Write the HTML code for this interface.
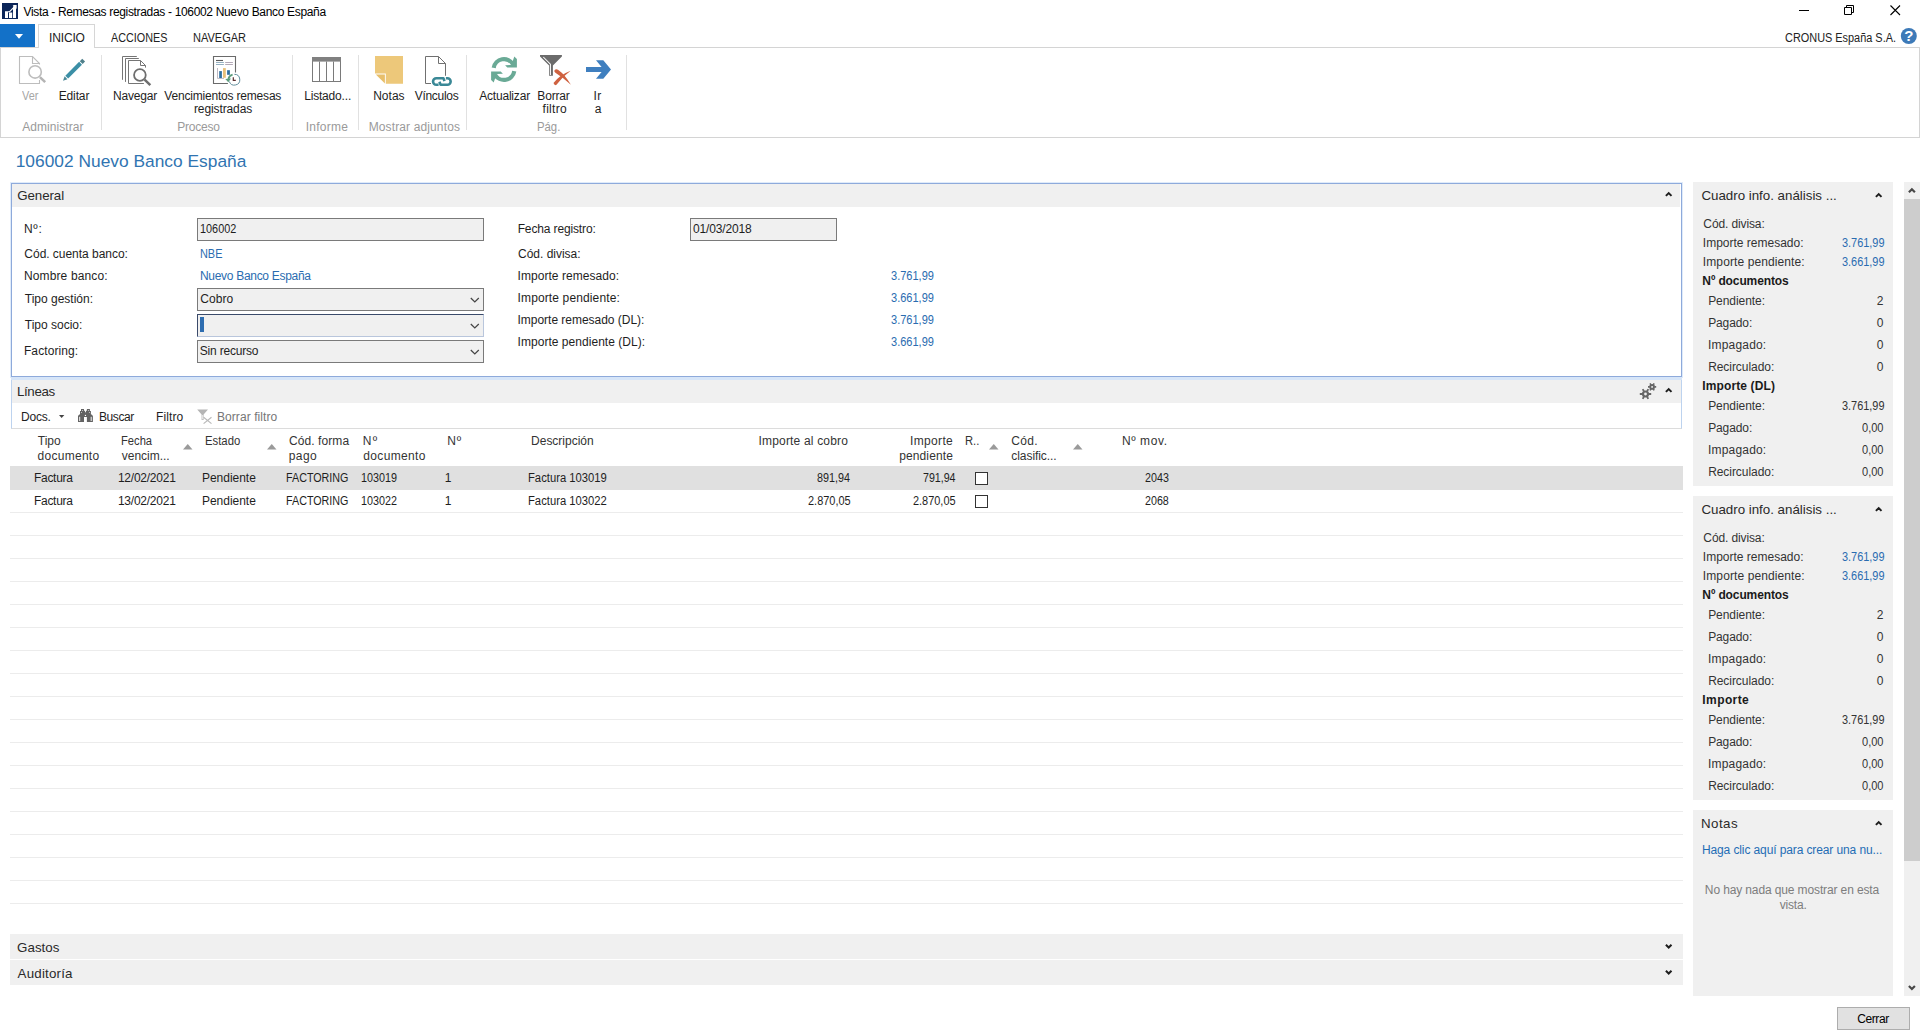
<!DOCTYPE html>
<html lang="es"><head><meta charset="utf-8"><title>Vista - Remesas registradas - 106002 Nuevo Banco España</title>
<style>
html,body{margin:0;padding:0;overflow:hidden}
body{width:1920px;height:1035px;position:relative;overflow:hidden;background:#fff;font-family:"Liberation Sans",sans-serif;font-size:12px;color:#1e1e1e}
.t{position:absolute;white-space:pre;font-size:12px;line-height:12px;transform-origin:0 0;margin:0;font-weight:400}
.a{position:absolute}
.sep{position:absolute;top:55px;height:75px;width:1px;background:#e1e1e1}
.hdr{position:absolute;background:#f0f0f0}
.inp{position:absolute;box-sizing:border-box;border:1px solid #7a7a7a;background:#f0f0f0}
.gl{position:absolute;left:10px;width:1673px;height:1px;background:#ececec}
.pnl{position:absolute;left:1693px;width:200px;background:#f0f0f0}
svg{position:absolute;overflow:visible}
</style></head><body>
<!-- ===== title bar ===== -->

<!-- window controls -->
<svg style="left:1790px;top:0" width="130" height="24" viewBox="0 0 130 24">
<path d="M9 10.5h10" stroke="#000" stroke-width="1" fill="none"/>
<path d="M54.5 7.5h7v7h-7zM56.5 7.5v-2h7v7h-2" stroke="#000" stroke-width="1" fill="none"/>
<path d="M100.5 5.5l9.5 9.5M110 5.5l-9.5 9.5" stroke="#000" stroke-width="1.1" fill="none"/>
</svg>
<!-- ===== tabs ===== -->
<div class="a" style="left:0;top:24px;width:35px;height:23px;background:#1371c8"></div>
<svg style="left:15px;top:33.6px" width="10" height="6"><path d="M0 0h8l-4 4.8z" fill="#fff"/></svg>
<div class="a" style="left:0;top:47px;width:1920px;height:91px;box-sizing:border-box;border:1px solid #d4d4d4"></div>
<div class="a" style="left:38px;top:24px;width:57px;height:24px;box-sizing:border-box;border:1px solid #d6d6d6;border-bottom:none;background:#fff"></div>
<!-- help -->
<svg style="left:1900px;top:28px" width="18" height="18" viewBox="0 0 18 18"><circle cx="8.8" cy="8" r="8" fill="#3d7ab8"/><text x="8.8" y="13.3" text-anchor="middle" font-family="Liberation Sans,sans-serif" font-weight="700" font-size="15" fill="#fff">?</text></svg>
<!-- ribbon separators -->
<div class="sep" style="left:101px"></div><div class="sep" style="left:292px"></div><div class="sep" style="left:358px"></div><div class="sep" style="left:466px"></div><div class="sep" style="left:626px"></div>
<!-- ===== General ===== -->
<div class="a" style="left:11px;top:183px;width:1671px;height:194px;box-sizing:border-box;border:1px solid #8eaadb;box-shadow:0 0 0 1px #dfebfa"></div>
<div class="a" style="left:11px;top:377px;width:1671px;height:3px;background:#d6e5f8"></div>
<div class="hdr" style="left:12px;top:184px;width:1668px;height:23px"></div>
<svg style="left:1664.8px;top:191.3px" width="9" height="7"><path d="M0.9 4.9L3.7 2.1L6.5 4.9" stroke="#1e1e1e" stroke-width="2" fill="none"/></svg>
<div class="inp" style="left:197px;top:218px;width:287px;height:23px"></div>
<div class="inp" style="left:690px;top:218px;width:147px;height:23px"></div>
<div class="inp" style="left:197px;top:288px;width:287px;height:23px"></div>
<div class="inp" style="left:197px;top:314px;width:287px;height:23px;border-color:#3a4a6a #b9c6dc #b9c6dc #3a4a6a"></div>
<div class="a" style="left:200px;top:317px;width:4px;height:15px;background:#2e6db0"></div>
<div class="inp" style="left:197px;top:340px;width:287px;height:23px"></div>
<svg style="left:470.4px;top:296.9px" width="10" height="7"><path d="M0.8 1l4 4 4-4" stroke="#444" stroke-width="1.2" fill="none"/></svg>
<svg style="left:470.4px;top:322.9px" width="10" height="7"><path d="M0.8 1l4 4 4-4" stroke="#444" stroke-width="1.2" fill="none"/></svg>
<svg style="left:470.4px;top:348.9px" width="10" height="7"><path d="M0.8 1l4 4 4-4" stroke="#444" stroke-width="1.2" fill="none"/></svg>
<!-- ===== Lineas ===== -->
<div class="a" style="left:11px;top:380px;width:1671px;height:49px;box-sizing:border-box;border:1px solid #bdd3ef;border-top:none;border-bottom-color:#dcdcdc"></div>
<div class="hdr" style="left:12px;top:380px;width:1669px;height:23px"></div>
<svg style="left:1664.8px;top:387.3px" width="9" height="7"><path d="M0.9 4.9L3.7 2.1L6.5 4.9" stroke="#1e1e1e" stroke-width="2" fill="none"/></svg>
<!--GEAR-->
<svg style="left:59px;top:415.2px" width="6" height="4"><path d="M0 0h5.3l-2.65 2.9z" fill="#444"/></svg>
<!--LICONS-->
<!-- sort triangles -->
<svg style="left:183px;top:444px" width="10" height="6"><path d="M0 5.5h9.5L4.75 0z" fill="#9a9a9a"/></svg>
<svg style="left:267px;top:444px" width="10" height="6"><path d="M0 5.5h9.5L4.75 0z" fill="#9a9a9a"/></svg>
<svg style="left:989px;top:444px" width="10" height="6"><path d="M0 5.5h9.5L4.75 0z" fill="#9a9a9a"/></svg>
<svg style="left:1073px;top:444px" width="10" height="6"><path d="M0 5.5h9.5L4.75 0z" fill="#9a9a9a"/></svg>
<!-- selected row -->
<div class="a" style="left:10px;top:466px;width:1673px;height:23.5px;background:#e0e0e0"></div>
<div class="a" style="left:975px;top:472px;width:13px;height:13px;box-sizing:border-box;border:1px solid #333;background:#fff"></div>
<div class="a" style="left:975px;top:495px;width:13px;height:13px;box-sizing:border-box;border:1px solid #333;background:#fff"></div>
<div class="gl" style="top:512px"></div><div class="gl" style="top:535px"></div><div class="gl" style="top:558px"></div><div class="gl" style="top:581px"></div><div class="gl" style="top:604px"></div><div class="gl" style="top:627px"></div><div class="gl" style="top:650px"></div><div class="gl" style="top:673px"></div><div class="gl" style="top:696px"></div><div class="gl" style="top:719px"></div><div class="gl" style="top:742px"></div><div class="gl" style="top:765px"></div><div class="gl" style="top:788px"></div><div class="gl" style="top:811px"></div><div class="gl" style="top:834px"></div><div class="gl" style="top:857px"></div><div class="gl" style="top:880px"></div><div class="gl" style="top:903px"></div>
<!-- ===== Gastos / Auditoria ===== -->
<div class="hdr" style="left:10px;top:934px;width:1673px;height:25px"></div>
<div class="hdr" style="left:10px;top:960px;width:1673px;height:25px"></div>
<svg style="left:1664.8px;top:944px" width="9" height="7"><path d="M0.9 0.7L3.7 3.5L6.5 0.7" stroke="#1e1e1e" stroke-width="2" fill="none"/></svg>
<svg style="left:1664.8px;top:970px" width="9" height="7"><path d="M0.9 0.7L3.7 3.5L6.5 0.7" stroke="#1e1e1e" stroke-width="2" fill="none"/></svg>
<!-- ===== right panels ===== -->
<div class="pnl" style="top:182px;height:304px"></div>
<div class="pnl" style="top:496px;height:304px"></div>
<div class="pnl" style="top:810px;height:186px"></div>
<svg style="left:1874.8px;top:192.3px" width="9" height="7"><path d="M0.9 4.9L3.7 2.1L6.5 4.9" stroke="#1e1e1e" stroke-width="2" fill="none"/></svg>
<svg style="left:1874.8px;top:506.3px" width="9" height="7"><path d="M0.9 4.9L3.7 2.1L6.5 4.9" stroke="#1e1e1e" stroke-width="2" fill="none"/></svg>
<svg style="left:1874.8px;top:820.3px" width="9" height="7"><path d="M0.9 4.9L3.7 2.1L6.5 4.9" stroke="#1e1e1e" stroke-width="2" fill="none"/></svg>
<!-- scrollbar -->
<div class="a" style="left:1904px;top:182px;width:16px;height:814px;background:#f0f0f0"></div>
<div class="a" style="left:1904px;top:199px;width:16px;height:662px;background:#cdcdcd"></div>
<svg style="left:1907.6px;top:187.2px" width="10" height="7"><path d="M0.9 5.3L3.9 2.3L6.9 5.3" stroke="#484848" stroke-width="2.2" fill="none"/></svg>
<svg style="left:1907.6px;top:984.6px" width="10" height="7"><path d="M0.9 1L3.9 4L6.9 1" stroke="#484848" stroke-width="2.2" fill="none"/></svg>
<!-- Cerrar -->
<div class="a" style="left:1837px;top:1007px;width:73px;height:23px;box-sizing:border-box;border:1px solid #adadad;background:#e1e1e1"></div>
<svg style="left:0;top:0" width="1920" height="1035" viewBox="0 0 1920 1035" fill="none">
<!-- app logo -->
<rect x="2" y="3" width="16" height="16" fill="#0b2559"/>
<path d="M5 12h3v6h-3zM9 12.6h3.2v5.4H9zM13 6.2h3v11.8h-3z" fill="#fff"/>
<path d="M5 11.7h4.6L14.8 6.4" stroke="#fff" stroke-width="1.1"/>
<path d="M12.6 5h4v4z" fill="#fff"/>
<!-- Ver (disabled) -->
<g stroke="#bdbdbd" stroke-width="1.1">
<path d="M39.5 64.6V63.5L32.5 56.5H19.5V83.5H39.5V80"/>
<path d="M32.5 56.5V63.5H39.5"/>
<circle cx="35.1" cy="71.9" r="6.2" stroke-width="1.6" fill="#fff"/>
<path d="M39.9 77.1L45.2 82.2" stroke-width="2.5" stroke="#b4b4b4"/>
</g>
<!-- Editar pencil -->
<g transform="translate(63 80.8) rotate(-45)">
<path d="M0 0L4.3-2V2z" fill="#4a8898"/>
<rect x="5.3" y="-2" width="19.5" height="4" fill="#3b8fa6"/>
<rect x="25.8" y="-2" width="3.4" height="4" fill="#4e7f8a"/>
</g>
<!-- Navegar -->
<g stroke="#757575" stroke-width="1">
<path d="M136.8 56.5H122.5V79.8"/>
<path d="M138.8 58.5H125.5V81.9"/>
<path d="M145.5 67.6V65.5L140.5 60.5H128.5V83.5H143.9"/>
<path d="M140.5 60.5V65.5H145.5"/>
<circle cx="139.9" cy="75" r="5.85" stroke-width="1.8" stroke="#6e6e6e" fill="#fff"/>
<path d="M144.6 79.6L150.3 85.1" stroke-width="2.5" stroke="#6e6e6e"/>
</g>
<!-- Vencimientos remesas registradas -->
<path d="M235.5 72.6V56.5H213.5V83.5H227.9" stroke="#6a6a6a" stroke-width="1.1"/>
<path d="M216 60.5H223" stroke="#5a5a5a" stroke-width="1.1"/>
<path d="M216 62.5H223.9M216 64.5H223.9" stroke="#8aa8bb" stroke-width="0.9"/>
<path d="M225.2 62.5H232.9M225.2 64.5H232.9" stroke="#ab9fb0" stroke-width="0.9"/>
<path d="M217.5 68V78.4H224" stroke="#b5b0bb" stroke-width="0.9"/>
<rect x="219.2" y="71.1" width="2.7" height="6.9" fill="#2f6f9f"/>
<rect x="223" y="68.1" width="2.8" height="9.7" fill="#e8c07a"/>
<rect x="227.1" y="70.2" width="2.8" height="4.6" fill="#2f6f9f"/>
<circle cx="234.4" cy="79.7" r="5.4" fill="#fff"/>
<path d="M234.4 74.3A5.4 5.4 0 1 1 229.3 81.5" stroke="#5f8d9c" stroke-width="1"/>
<path d="M233.3 77.2V80.4H235.8" stroke="#5a3030" stroke-width="1.2"/>
<path d="M232.6 74.6Q229.2 75.4 228.4 79" stroke="#5c9c7c" stroke-width="1.9"/>
<path d="M225.3 78.9L231 78.5L228.3 82.3z" fill="#5c9c7c"/>
<!-- Listado -->
<rect x="312.5" y="57.5" width="28" height="24" stroke="#7a7a7a" fill="#fff"/>
<rect x="312" y="57" width="29" height="4.6" fill="#808080"/>
<path d="M319.5 61.5V81.5M326.5 61.5V81.5M333.5 61.5V81.5" stroke="#7a7a7a"/>
<!-- Notas -->
<path d="M375 56H403V83.8H385.8V73.6H375z" fill="#edc87a"/>
<path d="M375.8 74.6H384.9V83.6z" fill="#e8bf6b"/>
<!-- Vinculos -->
<g stroke="#707070" stroke-width="1">
<path d="M431 83.5H425.5V56.5H438.5L445.5 63.5V75.8"/>
<path d="M438.5 56.5V63.5H445.5"/>
</g>
<g stroke="#3a8896" stroke-width="2.6" stroke-linejoin="round">
<path d="M438.6 84.8H436.3A3.25 3.25 0 0 1 436.3 78.3H443.5L444.5 81.2"/>
<path d="M445.9 78.3H447.4A3.25 3.25 0 0 1 447.4 84.8H440.6L439.4 81.8"/>
</g>
<!-- Actualizar -->
<g id="upd" fill="#6aaa96">
<path d="M493.73 67.87A10.4 10.4 0 0 1 513 64.3" stroke="#6aaa96" stroke-width="4.2" fill="none"/>
<path d="M514.3 56.6L516.9 59V67.6H507.3L505.1 65.2L511 64.9L512.6 61.6z"/>
</g>
<g transform="rotate(180 504 69.5)" fill="#6aaa96">
<path d="M493.73 67.87A10.4 10.4 0 0 1 513 64.3" stroke="#6aaa96" stroke-width="4.2" fill="none"/>
<path d="M514.3 56.6L516.9 59V67.6H507.3L505.1 65.2L511 64.9L512.6 61.6z"/>
</g>
<!-- Borrar filtro -->
<path d="M540 54.9H561.9V56.5L552.9 65.6V75.8H549.1V65.6L540 56.5z" fill="#6b6b6b"/>
<path d="M543.3 57L550.4 64.2V74.9" stroke="#fff" stroke-width="1.05"/>
<path d="M554.5 70.3Q555.8 68.5 558 69.7Q565 74.6 570.9 84.8Q563 77.6 555.4 72.8Q553.8 71.6 554.5 70.3z" fill="#cf6240"/>
<path d="M553.5 83.1Q559.2 75 570.7 70.7Q562.3 76.6 556.5 84.7Q554.6 86.2 553.5 83.1z" fill="#cf6240"/>
<!-- Ir a -->
<path d="M596 60.2H603.3L611 69.5L603.3 78.8H596L601.6 72H586V67H601.6z" fill="#3f7fbf"/>
<!-- Lineas toolbar: binoculars -->
<g fill="#636363">
<path d="M81 409H84V410.8H85V412.6H85.9V417H84V422H78V416L79.2 414.6H80V411H81z"/>
<path d="M89.9 409H86.9V410.8H85.9V412.6H85V417H86.9V422H92.9V416L91.7 414.6H90.9V411H89.9z"/>
</g>
<path d="M79.7 416.8V421M91.2 416.8V421" stroke="#f4f4f4" stroke-width="1"/>
<circle cx="85.45" cy="415.4" r="0.65" fill="#fff"/>
<circle cx="82.5" cy="410.4" r="0.5" fill="#ddd"/><circle cx="81.5" cy="412.5" r="0.5" fill="#ddd"/>
<circle cx="88.4" cy="410.4" r="0.5" fill="#ddd"/><circle cx="89.4" cy="412.5" r="0.5" fill="#ddd"/>
<!-- small filter -->
<path d="M197.2 409.4H208L203.6 414.6V420H201.6V414.6z" fill="#b4b4b4"/>
<path d="M202.6 415V419.3" stroke="#fff" stroke-width="0.7"/>
<path d="M203.6 417.3L211.5 423.6M211.5 417.3L203.6 423.6" stroke="#b9b9b9" stroke-width="1.2"/>
<!-- gears -->
<g stroke="#666">
<circle cx="1645.5" cy="394" r="2.5" stroke-width="2.2"/>
<path d="M1648.7 394H1651.2M1642.3 394H1639.8M1647.1 396.8L1648.3 398.9M1643.9 391.2L1642.7 389.1M1647.1 391.2L1648.3 389.1M1643.9 396.8L1642.7 398.9" stroke-width="1.8"/>
<circle cx="1652.1" cy="386.9" r="1.9" stroke-width="1.9"/>
<path d="M1654.4 386.9H1656.2M1649.8 386.9H1648M1653.25 388.9L1654.15 390.45M1650.95 384.9L1650.05 383.35M1653.25 384.9L1654.15 383.35M1650.95 388.9L1650.05 390.45" stroke-width="1.6"/>
</g>
</svg>

<section id="titlebar">
<span class="t" style="left:23.46px;top:6px;letter-spacing:-0.333px;color:#000;">Vista - Remesas registradas - 106002 Nuevo Banco España</span>
</section>
<section id="ribbon-tabs">
<span class="t" style="left:49.05px;top:32px;letter-spacing:-0.154px;color:#222;">INICIO</span>
<span class="t" style="left:110.65px;top:32px;transform:scaleX(0.8997);color:#222;">ACCIONES</span>
<span class="t" style="left:192.85px;top:32px;transform:scaleX(0.9182);color:#222;">NAVEGAR</span>
<span class="t" style="left:1784.82px;top:32px;transform:scaleX(0.9093);color:#222;">CRONUS España S.A.</span>
</section>
<section id="ribbon-actions">
<span class="t" style="left:22.16px;top:90px;transform:scaleX(0.9087);color:#a6a6a6;">Ver</span>
<span class="t" style="left:58.65px;top:90px;letter-spacing:-0.115px;">Editar</span>
<span class="t" style="left:112.95px;top:90px;letter-spacing:-0.158px;">Navegar</span>
<span class="t" style="left:164.36px;top:90px;letter-spacing:-0.196px;">Vencimientos remesas</span>
<span class="t" style="left:193.92px;top:103px;letter-spacing:-0.100px;">registradas</span>
<span class="t" style="left:304.15px;top:90px;letter-spacing:-0.175px;">Listado...</span>
<span class="t" style="left:373.15px;top:90px;letter-spacing:0.021px;">Notas</span>
<span class="t" style="left:414.66px;top:90px;letter-spacing:-0.284px;">Vínculos</span>
<span class="t" style="left:479.16px;top:90px;letter-spacing:-0.189px;">Actualizar</span>
<span class="t" style="left:537.35px;top:90px;letter-spacing:-0.190px;">Borrar</span>
<span class="t" style="left:542.56px;top:103px;letter-spacing:0.282px;">filtro</span>
<span class="t" style="left:593.45px;top:90px;letter-spacing:0.428px;">Ir</span>
<span class="t" style="left:594.63px;top:103px;">a</span>
<span class="t" style="left:22.16px;top:121px;letter-spacing:0.070px;color:#9a9a9a;">Administrar</span>
<span class="t" style="left:177.35px;top:121px;letter-spacing:-0.245px;color:#9a9a9a;">Proceso</span>
<span class="t" style="left:305.65px;top:121px;letter-spacing:0.285px;color:#9a9a9a;">Informe</span>
<span class="t" style="left:368.65px;top:121px;letter-spacing:0.128px;color:#9a9a9a;">Mostrar adjuntos</span>
<span class="t" style="left:536.85px;top:121px;transform:scaleX(0.9440);color:#9a9a9a;">Pág.</span>
</section>
<section id="page-title">
<h1 class="t" style="left:15.72px;top:153px;font-size:17.33px;line-height:17.33px;letter-spacing:0.015px;color:#3074b1;">106002 Nuevo Banco España</h1>
</section>
<section id="fasttab-general">
<span class="t" style="left:17.19px;top:189px;font-size:13.33px;line-height:13.33px;letter-spacing:-0.078px;color:#2a2a2a;">General</span>
<span class="t" style="left:23.95px;top:223px;letter-spacing:0.770px;">Nº:</span>
<span class="t" style="left:24.36px;top:248px;letter-spacing:-0.034px;">Cód. cuenta banco:</span>
<span class="t" style="left:23.95px;top:270px;letter-spacing:0.132px;">Nombre banco:</span>
<span class="t" style="left:24.76px;top:293px;">Tipo gestión:</span>
<span class="t" style="left:24.76px;top:319px;">Tipo socio:</span>
<span class="t" style="left:23.95px;top:345px;letter-spacing:0.092px;">Factoring:</span>
<span class="t" style="left:200.20px;top:223px;transform:scaleX(0.9059);">106002</span>
<span class="t" style="left:200.15px;top:248px;transform:scaleX(0.9087);color:#2a6cb0;">NBE</span>
<span class="t" style="left:199.95px;top:270px;letter-spacing:-0.295px;color:#2a6cb0;">Nuevo Banco España</span>
<span class="t" style="left:200.36px;top:293px;letter-spacing:0.061px;">Cobro</span>
<span class="t" style="left:199.79px;top:345px;letter-spacing:-0.205px;">Sin recurso</span>
<span class="t" style="left:517.65px;top:223px;letter-spacing:-0.134px;">Fecha registro:</span>
<span class="t" style="left:693.11px;top:223px;letter-spacing:-0.168px;">01/03/2018</span>
<span class="t" style="left:518.06px;top:248px;letter-spacing:-0.016px;">Cód. divisa:</span>
<span class="t" style="left:517.55px;top:270px;letter-spacing:0.051px;">Importe remesado:</span>
<span class="t" style="left:517.55px;top:292px;letter-spacing:0.127px;">Importe pendiente:</span>
<span class="t" style="left:517.55px;top:314px;letter-spacing:-0.027px;">Importe remesado (DL):</span>
<span class="t" style="left:517.55px;top:336px;letter-spacing:0.038px;">Importe pendiente (DL):</span>
<span class="t" style="left:891.05px;top:270px;transform:scaleX(0.9180);color:#2a6cb0;">3.761,99</span>
<span class="t" style="left:891.05px;top:292px;transform:scaleX(0.9180);color:#2a6cb0;">3.661,99</span>
<span class="t" style="left:891.05px;top:314px;transform:scaleX(0.9180);color:#2a6cb0;">3.761,99</span>
<span class="t" style="left:891.05px;top:336px;transform:scaleX(0.9180);color:#2a6cb0;">3.661,99</span>
</section>
<section id="fasttab-lineas">
<span class="t" style="left:16.92px;top:385px;font-size:13.33px;line-height:13.33px;letter-spacing:-0.340px;color:#2a2a2a;">Líneas</span>
<span class="t" style="left:20.95px;top:411px;letter-spacing:-0.175px;">Docs.</span>
<span class="t" style="left:98.95px;top:411px;letter-spacing:-0.390px;">Buscar</span>
<span class="t" style="left:155.95px;top:411px;letter-spacing:0.121px;">Filtro</span>
<span class="t" style="left:216.95px;top:411px;letter-spacing:0.082px;color:#767676;">Borrar filtro</span>
</section>
<section id="lineas-grid-header">
<span class="t" style="left:37.76px;top:435px;letter-spacing:0.021px;color:#333;">Tipo</span>
<span class="t" style="left:37.46px;top:450px;letter-spacing:0.291px;color:#333;">documento</span>
<span class="t" style="left:120.95px;top:435px;transform:scaleX(0.9313);color:#333;">Fecha</span>
<span class="t" style="left:121.76px;top:450px;letter-spacing:-0.010px;color:#333;">vencim...</span>
<span class="t" style="left:204.95px;top:435px;transform:scaleX(0.9436);color:#333;">Estado</span>
<span class="t" style="left:288.96px;top:435px;letter-spacing:0.087px;color:#333;">Cód. forma</span>
<span class="t" style="left:288.83px;top:450px;letter-spacing:0.353px;color:#333;">pago</span>
<span class="t" style="left:362.75px;top:435px;letter-spacing:1.440px;color:#333;">Nº</span>
<span class="t" style="left:363.26px;top:450px;letter-spacing:0.343px;color:#333;">documento</span>
<span class="t" style="left:447.15px;top:435px;letter-spacing:1.047px;color:#333;">Nº</span>
<span class="t" style="left:531.05px;top:435px;letter-spacing:-0.005px;color:#333;">Descripción</span>
<span class="t" style="left:758.55px;top:435px;letter-spacing:0.174px;color:#333;">Importe al cobro</span>
<span class="t" style="left:909.95px;top:435px;letter-spacing:0.357px;color:#333;">Importe</span>
<span class="t" style="left:899.13px;top:450px;letter-spacing:0.135px;color:#333;">pendiente</span>
<span class="t" style="left:964.85px;top:435px;transform:scaleX(0.9330);color:#333;">R..</span>
<span class="t" style="left:1011.26px;top:435px;letter-spacing:0.311px;color:#333;">Cód.</span>
<span class="t" style="left:1011.35px;top:450px;letter-spacing:-0.075px;color:#333;">clasific...</span>
<span class="t" style="left:1121.95px;top:435px;letter-spacing:0.598px;color:#333;">Nº mov.</span>
</section>
<section id="lineas-grid-rows">
<span class="t" style="left:33.95px;top:472px;letter-spacing:-0.275px;">Factura</span>
<span class="t" style="left:117.95px;top:472px;letter-spacing:-0.243px;">12/02/2021</span>
<span class="t" style="left:201.95px;top:472px;letter-spacing:-0.020px;">Pendiente</span>
<span class="t" style="left:286.06px;top:472px;transform:scaleX(0.8949);">FACTORING</span>
<span class="t" style="left:360.50px;top:472px;transform:scaleX(0.8994);">103019</span>
<span class="t" style="left:444.65px;top:472px;">1</span>
<span class="t" style="left:527.95px;top:472px;transform:scaleX(0.9376);">Factura 103019</span>
<span class="t" style="left:817.26px;top:472px;transform:scaleX(0.8985);">891,94</span>
<span class="t" style="left:922.76px;top:472px;transform:scaleX(0.8866);">791,94</span>
<span class="t" style="left:1145.33px;top:472px;transform:scaleX(0.8935);">2043</span>
<span class="t" style="left:33.95px;top:495px;letter-spacing:-0.275px;">Factura</span>
<span class="t" style="left:117.95px;top:495px;letter-spacing:-0.243px;">13/02/2021</span>
<span class="t" style="left:201.95px;top:495px;letter-spacing:-0.020px;">Pendiente</span>
<span class="t" style="left:286.06px;top:495px;transform:scaleX(0.8949);">FACTORING</span>
<span class="t" style="left:360.50px;top:495px;transform:scaleX(0.8991);">103022</span>
<span class="t" style="left:444.65px;top:495px;">1</span>
<span class="t" style="left:527.95px;top:495px;transform:scaleX(0.9375);">Factura 103022</span>
<span class="t" style="left:807.92px;top:495px;transform:scaleX(0.9134);">2.870,05</span>
<span class="t" style="left:913.03px;top:495px;transform:scaleX(0.9108);">2.870,05</span>
<span class="t" style="left:1145.36px;top:495px;transform:scaleX(0.8910);">2068</span>
</section>
<section id="fasttabs-collapsed">
<span class="t" style="left:17.09px;top:941px;font-size:13.33px;line-height:13.33px;letter-spacing:0.024px;color:#2a2a2a;">Gastos</span>
<span class="t" style="left:17.56px;top:967px;font-size:13.33px;line-height:13.33px;letter-spacing:0.205px;color:#2a2a2a;">Auditoría</span>
</section>
<section id="factbox-analisis-1">
<span class="t" style="left:1701.39px;top:189px;font-size:13.33px;line-height:13.33px;letter-spacing:-0.005px;color:#2a2a2a;">Cuadro info. análisis ...</span>
<span class="t" style="left:1703.36px;top:218px;letter-spacing:-0.118px;color:#333;">Cód. divisa:</span>
<span class="t" style="left:1702.85px;top:237px;color:#333;">Importe remesado:</span>
<span class="t" style="left:1702.85px;top:256px;letter-spacing:0.098px;color:#333;">Importe pendiente:</span>
<span class="t" style="left:1841.56px;top:237px;transform:scaleX(0.9098);color:#2a6cb0;">3.761,99</span>
<span class="t" style="left:1841.56px;top:256px;transform:scaleX(0.9098);color:#2a6cb0;">3.661,99</span>
<b class="t" style="left:1702.33px;top:275px;letter-spacing:-0.111px;color:#1a1a1a;font-weight:700;">Nº documentos</b>
<span class="t" style="left:1708.15px;top:295px;letter-spacing:-0.062px;color:#333;">Pendiente:</span>
<span class="t" style="left:1708.15px;top:317px;letter-spacing:-0.104px;color:#333;">Pagado:</span>
<span class="t" style="left:1708.05px;top:339px;letter-spacing:0.178px;color:#333;">Impagado:</span>
<span class="t" style="left:1708.15px;top:361px;letter-spacing:-0.056px;color:#333;">Recirculado:</span>
<span class="t" style="left:1876.77px;top:295px;color:#333;">2</span>
<span class="t" style="left:1876.71px;top:317px;color:#333;">0</span>
<span class="t" style="left:1876.71px;top:339px;color:#333;">0</span>
<span class="t" style="left:1876.71px;top:361px;color:#333;">0</span>
<b class="t" style="left:1702.33px;top:380px;letter-spacing:0.112px;color:#1a1a1a;font-weight:700;">Importe (DL)</b>
<span class="t" style="left:1708.15px;top:400px;letter-spacing:-0.062px;color:#333;">Pendiente:</span>
<span class="t" style="left:1708.15px;top:422px;letter-spacing:-0.104px;color:#333;">Pagado:</span>
<span class="t" style="left:1708.05px;top:444px;letter-spacing:0.178px;color:#333;">Impagado:</span>
<span class="t" style="left:1708.15px;top:466px;letter-spacing:-0.056px;color:#333;">Recirculado:</span>
<span class="t" style="left:1841.56px;top:400px;transform:scaleX(0.9098);color:#333;">3.761,99</span>
<span class="t" style="left:1862.34px;top:422px;transform:scaleX(0.9206);color:#333;">0,00</span>
<span class="t" style="left:1862.34px;top:444px;transform:scaleX(0.9206);color:#333;">0,00</span>
<span class="t" style="left:1862.34px;top:466px;transform:scaleX(0.9206);color:#333;">0,00</span>
</section>
<section id="factbox-analisis-2">
<span class="t" style="left:1701.39px;top:503px;font-size:13.33px;line-height:13.33px;letter-spacing:-0.005px;color:#2a2a2a;">Cuadro info. análisis ...</span>
<span class="t" style="left:1703.36px;top:532px;letter-spacing:-0.118px;color:#333;">Cód. divisa:</span>
<span class="t" style="left:1702.85px;top:551px;color:#333;">Importe remesado:</span>
<span class="t" style="left:1702.85px;top:570px;letter-spacing:0.098px;color:#333;">Importe pendiente:</span>
<span class="t" style="left:1841.56px;top:551px;transform:scaleX(0.9098);color:#2a6cb0;">3.761,99</span>
<span class="t" style="left:1841.56px;top:570px;transform:scaleX(0.9098);color:#2a6cb0;">3.661,99</span>
<b class="t" style="left:1702.33px;top:589px;letter-spacing:-0.111px;color:#1a1a1a;font-weight:700;">Nº documentos</b>
<span class="t" style="left:1708.15px;top:609px;letter-spacing:-0.062px;color:#333;">Pendiente:</span>
<span class="t" style="left:1708.15px;top:631px;letter-spacing:-0.104px;color:#333;">Pagado:</span>
<span class="t" style="left:1708.05px;top:653px;letter-spacing:0.178px;color:#333;">Impagado:</span>
<span class="t" style="left:1708.15px;top:675px;letter-spacing:-0.056px;color:#333;">Recirculado:</span>
<span class="t" style="left:1876.77px;top:609px;color:#333;">2</span>
<span class="t" style="left:1876.71px;top:631px;color:#333;">0</span>
<span class="t" style="left:1876.71px;top:653px;color:#333;">0</span>
<span class="t" style="left:1876.71px;top:675px;color:#333;">0</span>
<b class="t" style="left:1702.33px;top:694px;letter-spacing:0.405px;color:#1a1a1a;font-weight:700;">Importe</b>
<span class="t" style="left:1708.15px;top:714px;letter-spacing:-0.062px;color:#333;">Pendiente:</span>
<span class="t" style="left:1708.15px;top:736px;letter-spacing:-0.104px;color:#333;">Pagado:</span>
<span class="t" style="left:1708.05px;top:758px;letter-spacing:0.178px;color:#333;">Impagado:</span>
<span class="t" style="left:1708.15px;top:780px;letter-spacing:-0.056px;color:#333;">Recirculado:</span>
<span class="t" style="left:1841.56px;top:714px;transform:scaleX(0.9098);color:#333;">3.761,99</span>
<span class="t" style="left:1862.34px;top:736px;transform:scaleX(0.9206);color:#333;">0,00</span>
<span class="t" style="left:1862.34px;top:758px;transform:scaleX(0.9206);color:#333;">0,00</span>
<span class="t" style="left:1862.34px;top:780px;transform:scaleX(0.9206);color:#333;">0,00</span>
</section>
<section id="factbox-notas">
<span class="t" style="left:1700.92px;top:817px;font-size:13.33px;line-height:13.33px;letter-spacing:0.483px;color:#2a2a2a;">Notas</span>
<span class="t" style="left:1701.95px;top:844px;letter-spacing:-0.110px;color:#1f6db5;">Haga clic aquí para crear una nu...</span>
<span class="t" style="left:1704.85px;top:884px;letter-spacing:-0.125px;color:#7d7d7d;">No hay nada que mostrar en esta</span>
<span class="t" style="left:1779.66px;top:899px;letter-spacing:-0.156px;color:#7d7d7d;">vista.</span>
</section>
<section id="dialog-buttons">
<span class="t" style="left:1857.26px;top:1013px;letter-spacing:-0.414px;color:#000;">Cerrar</span>
</section>
</body></html>
